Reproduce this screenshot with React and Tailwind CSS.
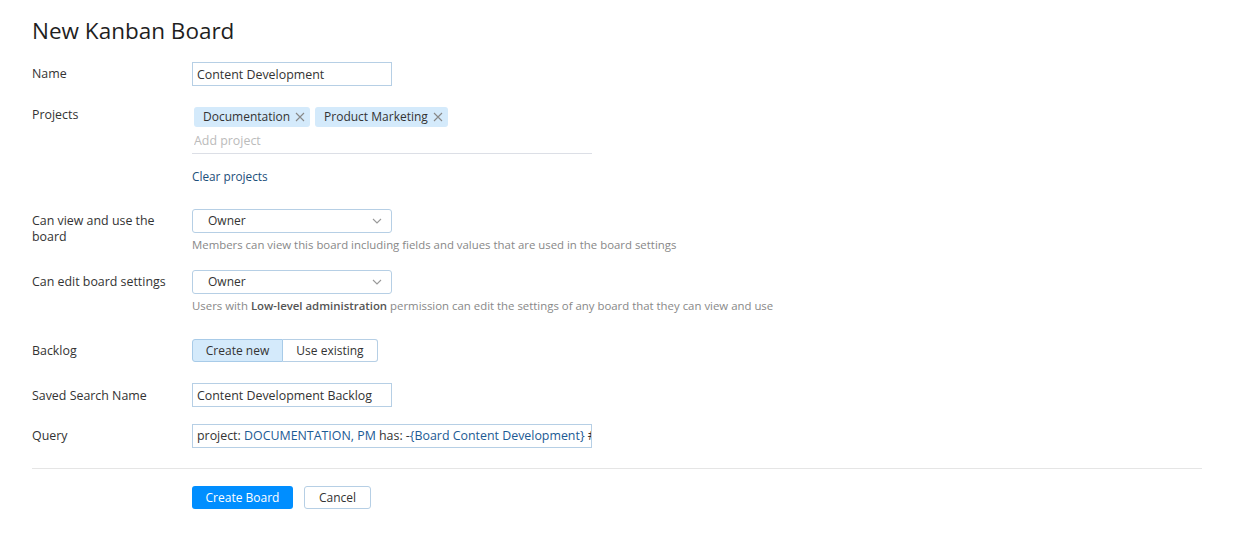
import React, { useState } from "react";

const font = { fontFamily: '"Open Sans", "Noto Sans", sans-serif' };

function Row({ label, labelPad = "pt-0", children, className = "" }) {
  return (
    <div className={`flex ${className}`}>
      <div className={`w-[160px] shrink-0 pr-4 text-[12.4px] leading-[16px] text-[#333] ${labelPad}`}>{label}</div>
      <div className="flex-1">{children}</div>
    </div>
  );
}

function Tag({ children }) {
  return (
    <span className="inline-flex h-[20px] items-center gap-[5px] rounded-[3px] bg-[#d4eafb] pl-[9px] pr-[5px] text-[12px] text-[#333]">
      {children}
      <svg width="10" height="10" viewBox="0 0 10 10" className="text-[#888]">
        <path d="M1 1l8 8M9 1l-8 8" stroke="currentColor" strokeWidth="1.1" />
      </svg>
    </span>
  );
}

function Select({ value }) {
  return (
    <div className="flex h-[24px] w-[200px] items-center justify-between rounded-[3px] border border-[#b6cfe5] bg-white pl-[15px] pr-[9px] text-[12px] text-[#333]">
      <span>{value}</span>
      <svg width="10" height="6" viewBox="0 0 10 6" className="text-[#999]">
        <path d="M1 1l4 4 4-4" fill="none" stroke="currentColor" strokeWidth="1.1" />
      </svg>
    </div>
  );
}

export default function App() {
  const [backlog, setBacklog] = useState("new");

  return (
    <div className="min-h-screen bg-white px-8 pt-[15px]" style={font}>
      <h1 className="text-[22.5px] leading-[32px] font-normal text-[#1f1f1f]">New Kanban Board</h1>

      <Row label="Name" labelPad="pt-[4px]" className="mt-[15px]">
        <input
          className="block h-[24px] w-[200px] border border-[#b6cfe5] px-[4px] text-[12.4px] text-[#333] outline-none"
          defaultValue="Content Development"
        />
      </Row>

      <Row label="Projects" className="mt-[21px]">
        <div className="w-[400px]">
          <div className="flex gap-[5px] pl-[2px]">
            <Tag>Documentation</Tag>
            <Tag>Product Marketing</Tag>
          </div>
          <input
            className="block h-[27px] w-full border-b border-[#dcdfe6] px-[2px] text-[12.4px] outline-none placeholder:text-[#bbb]"
            placeholder="Add project"
          />
          <div className="mt-[14px] text-[11.8px] leading-[16px] text-[#1c4f7a]">Clear projects</div>
        </div>
      </Row>

      <Row label="Can view and use the board" labelPad="pt-[4px]" className="mt-[25px]">
        <Select value="Owner" />
        <div className="mt-[5px] text-[11.4px] leading-[14px] text-[#888]">
          Members can view this board including fields and values that are used in the board settings
        </div>
      </Row>

      <Row label="Can edit board settings" labelPad="pt-[4px]" className="mt-[18px]">
        <Select value="Owner" />
        <div className="mt-[5px] text-[11.4px] leading-[14px] text-[#888]">
          Users with <b className="font-semibold text-[#555]">Low-level administration</b> permission can edit the
          settings of any board that they can view and use
        </div>
      </Row>

      <Row label="Backlog" labelPad="pt-[4px]" className="mt-[26px]">
        <div className="flex h-[23px] w-fit text-[12px]">
          <button
            onClick={() => setBacklog("new")}
            className={`w-[91px] rounded-l-[3px] border border-[#a8cbe8] ${backlog === "new" ? "bg-[#d4eafb]" : "bg-white"} text-[#333]`}
          >
            Create new
          </button>
          <button
            onClick={() => setBacklog("existing")}
            className={`w-[95px] rounded-r-[3px] border border-l-0 border-[#b6cfe5] ${backlog === "existing" ? "bg-[#d4eafb]" : "bg-white"} text-[#333]`}
          >
            Use existing
          </button>
        </div>
      </Row>

      <Row label="Saved Search Name" labelPad="pt-[5px]" className="mt-[21px]">
        <input
          className="block h-[24px] w-[200px] border border-[#b6cfe5] px-[4px] text-[12.4px] text-[#333] outline-none"
          defaultValue="Content Development Backlog"
        />
      </Row>

      <Row label="Query" labelPad="pt-[4px]" className="mt-[17px]">
        <div className="flex h-[24px] w-[400px] items-center overflow-hidden whitespace-nowrap border border-[#b6cfe5] px-[4px] text-[12.4px]">
          <span className="text-[#333]">project:&nbsp;</span>
          <span className="text-[#1c5a94]">DOCUMENTATION, PM</span>
          <span className="text-[#333]">&nbsp;has: -</span>
          <span className="text-[#1c5a94]">{"{Board Content Development}"}</span>
          <span className="text-[#333]">&nbsp;#</span>
        </div>
      </Row>

      <div className="mt-[20px] border-t border-[#e5e5e5]" />

      <div className="mt-[17px] flex gap-[11px] pl-[160px]">
        <button className="h-[23px] w-[101px] rounded-[3px] bg-[#008eff] text-[12px] text-white">Create Board</button>
        <button className="h-[23px] w-[67px] rounded-[3px] border border-[#b6cfe5] bg-white text-[12px] text-[#333]">
          Cancel
        </button>
      </div>
    </div>
  );
}
